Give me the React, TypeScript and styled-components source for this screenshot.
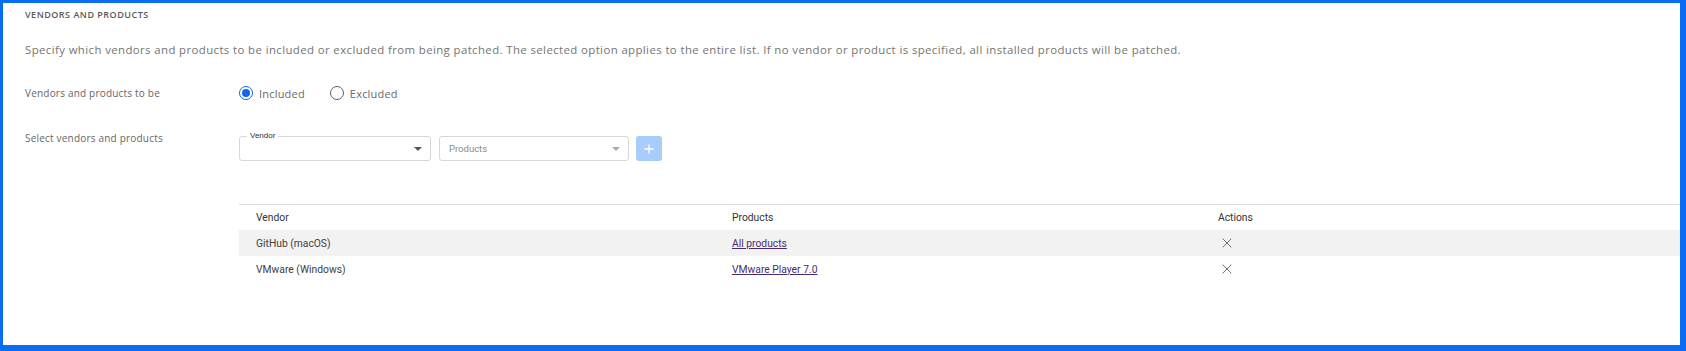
import React, { useState } from 'react';
import styled, { createGlobalStyle } from 'styled-components';

const rows = [
    { vendor: 'GitHub (macOS)', products: 'All products' },
    { vendor: 'VMware (Windows)', products: 'VMware Player 7.0' },
];

const GlobalStyle = createGlobalStyle`
    html, body {
        margin: 0;
        padding: 0;
        background: #ffffff;
    }
    * {
        box-sizing: border-box;
    }
`;

const App = () => {
    const [mode, setMode] = useState<'included' | 'excluded'>('included');
    return (
        <>
            <GlobalStyle />
            <Frame>
                <Title>Vendors and products</Title>
                <Description>
                    Specify which vendors and products to be included or excluded from being patched. The selected option applies to the entire list. If no vendor or product is specified, all installed products will be patched.
                </Description>
                <RadioRow>
                    <FormLabel>Vendors and products to be</FormLabel>
                    <Radios>
                        <RadioOption onClick={() => setMode('included')}>
                            <RadioCircle $checked={mode === 'included'} />
                            <span>Included</span>
                        </RadioOption>
                        <RadioOption onClick={() => setMode('excluded')}>
                            <RadioCircle $checked={mode === 'excluded'} />
                            <span>Excluded</span>
                        </RadioOption>
                    </Radios>
                </RadioRow>
                <SelectRow>
                    <FormLabel>Select vendors and products</FormLabel>
                    <Controls>
                        <Pickers>
                            <Field $width={192}>
                                <FloatingLabel>Vendor</FloatingLabel>
                                <Caret $disabled={false} />
                            </Field>
                            <Field $width={190}>
                                <Placeholder>Products</Placeholder>
                                <Caret $disabled />
                            </Field>
                            <AddButton disabled>
                                <svg width="10" height="10" viewBox="0 0 10 10">
                                    <path d="M5 0.5v9M0.5 5h9" stroke="#ffffff" strokeWidth="1.4" />
                                </svg>
                            </AddButton>
                        </Pickers>
                        <Table>
                            <HeadRow>
                                <Cell>Vendor</Cell>
                                <Cell>Products</Cell>
                                <Cell>Actions</Cell>
                            </HeadRow>
                            {rows.map((row, index) => (
                                <BodyRow key={row.vendor} $striped={index % 2 === 0}>
                                    <Cell>{row.vendor}</Cell>
                                    <Cell>
                                        <ProductLink href="#">{row.products}</ProductLink>
                                    </Cell>
                                    <Cell>
                                        <RemoveButton aria-label="Remove">
                                            <svg width="10" height="10" viewBox="0 0 10 10">
                                                <path d="M0.7 0.7l8.6 8.6M9.3 0.7l-8.6 8.6" stroke="#6f6f6f" strokeWidth="1" />
                                            </svg>
                                        </RemoveButton>
                                    </Cell>
                                </BodyRow>
                            ))}
                        </Table>
                    </Controls>
                </SelectRow>
            </Frame>
        </>
    );
};

export default App;

function Caret({ $disabled }: { $disabled: boolean }) {
    return (
        <CaretWrap>
            <svg width="8" height="4" viewBox="0 0 8 4">
                <path d="M0 0h8L4 4z" fill={$disabled ? '#a9a9a9' : '#555555'} />
            </svg>
        </CaretWrap>
    );
}

const Frame = styled.div`
    width: 1686px;
    height: 351px;
    border-style: solid;
    border-color: #0a6cf5;
    border-width: 3px 6px 6px 3px;
    padding: 0 0 0 22px;
    display: flex;
    flex-direction: column;
    overflow: hidden;
    font-family: 'Open Sans', 'Noto Sans', sans-serif;
`;

const Title = styled.div`
    margin-top: 6px;
    line-height: 12px;
    font-size: 9px;
    font-weight: 600;
    letter-spacing: 0.5px;
    text-transform: uppercase;
    color: #5a5a5a;
`;

const Description = styled.p`
    margin: 21px 0 0;
    line-height: 16px;
    font-size: 11.4px;
    letter-spacing: 0.4px;
    color: #747474;
    white-space: nowrap;
`;

const RadioRow = styled.div`
    margin-top: 25px;
    height: 20px;
    display: flex;
    align-items: center;
`;

const FormLabel = styled.div`
    width: 214px;
    flex-shrink: 0;
    line-height: 14px;
    font-size: 10px;
    letter-spacing: 0.2px;
    color: #666666;
`;

const Radios = styled.div`
    display: flex;
    align-items: center;
    gap: 25px;
`;

const RadioOption = styled.label`
    display: flex;
    align-items: center;
    gap: 6px;
    font-size: 11px;
    letter-spacing: 0.2px;
    color: #6a6a6a;
    cursor: pointer;
`;

const RadioCircle = styled.span<{ $checked: boolean }>`
    width: 14px;
    height: 14px;
    border-radius: 50%;
    border: ${p => (p.$checked ? '1.5px solid #1466e8' : '1px solid #5f5f5f')};
    display: flex;
    align-items: center;
    justify-content: center;
    &::after {
        content: '';
        width: 8px;
        height: 8px;
        border-radius: 50%;
        background: ${p => (p.$checked ? '#1466e8' : 'transparent')};
    }
`;

const SelectRow = styled.div`
    margin-top: 28px;
    display: flex;
    align-items: flex-start;
    flex: 1;
`;

const Controls = styled.div`
    flex: 1;
    padding-top: 5px;
    display: flex;
    flex-direction: column;
    gap: 43px;
`;

const Pickers = styled.div`
    display: flex;
    align-items: center;
    gap: 8px;
`;

const Field = styled.div<{ $width: number }>`
    position: relative;
    width: ${p => p.$width}px;
    height: 25px;
    border: 1px solid #d6d6d6;
    border-radius: 3px;
    display: flex;
    align-items: center;
    padding: 0 9px;
    background: #ffffff;
`;

const FloatingLabel = styled.span`
    position: absolute;
    top: -6px;
    left: 7px;
    padding: 0 3px;
    background: #ffffff;
    font-family: 'Liberation Sans', Arial, sans-serif;
    font-size: 8px;
    line-height: 10px;
    color: #2f2f2f;
`;

const Placeholder = styled.span`
    font-family: Roboto, 'Liberation Sans', sans-serif;
    font-size: 9.5px;
    color: #8a8a8a;
`;

const CaretWrap = styled.span`
    margin-left: auto;
    display: flex;
    align-items: center;
    margin-right: -1px;
`;

const AddButton = styled.button`
    width: 26px;
    height: 25px;
    margin-left: -1px;
    border: none;
    border-radius: 3px;
    background: #a8ccfb;
    display: flex;
    align-items: center;
    justify-content: center;
    padding: 0;
`;

const Table = styled.div`
    border-top: 1px solid #dcdcdc;
    display: flex;
    flex-direction: column;
    font-family: Roboto, 'Noto Sans', sans-serif;
    font-size: 10.3px;
`;

const HeadRow = styled.div`
    display: grid;
    grid-template-columns: 476px 486px 1fr;
    height: 25px;
    align-items: center;
    color: #333333;
`;

const BodyRow = styled.div<{ $striped: boolean }>`
    display: grid;
    grid-template-columns: 476px 486px 1fr;
    height: 26px;
    align-items: center;
    color: #404040;
    background: ${p => (p.$striped ? '#f2f2f2' : 'transparent')};
`;

const Cell = styled.div`
    padding-left: 17px;
    display: flex;
    align-items: center;
`;

const ProductLink = styled.a`
    color: #4a2b6e;
    text-decoration: underline;
    text-underline-offset: 1px;
`;

const RemoveButton = styled.button`
    width: 18px;
    height: 18px;
    border: none;
    background: transparent;
    padding: 0;
    display: flex;
    align-items: center;
    justify-content: center;
`;
